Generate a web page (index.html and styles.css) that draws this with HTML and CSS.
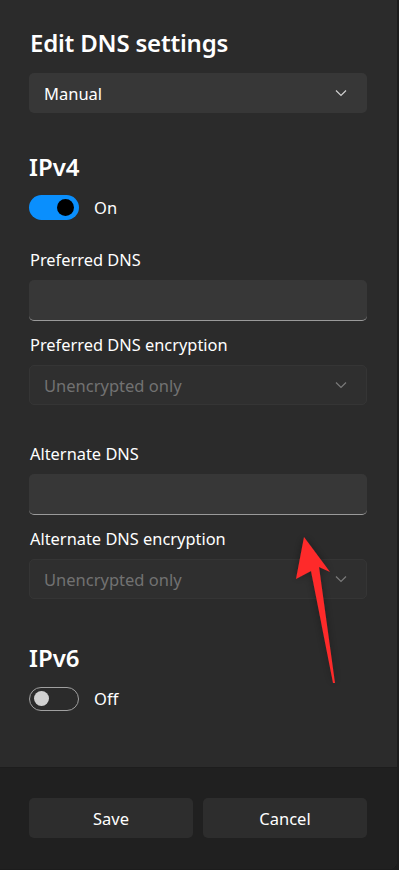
FILE: index.html
```html
<!DOCTYPE html>
<html lang="en">
<head>
<meta charset="utf-8">
<title>Edit DNS settings</title>
<link rel="stylesheet" href="styles.css">
</head>
<body>
<div class="dialog">
  <div class="content">
    <h1 class="title">Edit DNS settings</h1>
    <div class="select">
      <span>Manual</span>
      <svg class="chev" viewBox="0 0 12 8" width="12" height="8"><path d="M1 1.5 L6 6.5 L11 1.5" fill="none" stroke="currentColor" stroke-width="1.2"/></svg>
    </div>

    <h2 class="section">IPv4</h2>
    <div class="toggle-row">
      <span class="toggle on"><span class="knob"></span></span>
      <span class="toggle-label">On</span>
    </div>

    <div class="field first">
      <label class="label">Preferred DNS</label>
      <div class="input"></div>
    </div>
    <div class="field">
      <label class="label">Preferred DNS encryption</label>
      <div class="select disabled">
        <span>Unencrypted only</span>
        <svg class="chev" viewBox="0 0 12 8" width="12" height="8"><path d="M1 1.5 L6 6.5 L11 1.5" fill="none" stroke="currentColor" stroke-width="1.2"/></svg>
      </div>
    </div>

    <div class="field gap-top">
      <label class="label">Alternate DNS</label>
      <div class="input"></div>
    </div>
    <div class="field">
      <label class="label">Alternate DNS encryption</label>
      <div class="select disabled">
        <span>Unencrypted only</span>
        <svg class="chev" viewBox="0 0 12 8" width="12" height="8"><path d="M1 1.5 L6 6.5 L11 1.5" fill="none" stroke="currentColor" stroke-width="1.2"/></svg>
      </div>
    </div>

    <h2 class="section v6">IPv6</h2>
    <div class="toggle-row">
      <span class="toggle off"><span class="knob"></span></span>
      <span class="toggle-label">Off</span>
    </div>
  </div>
  <div class="footer">
    <button class="btn">Save</button>
    <button class="btn">Cancel</button>
  </div>

  <svg class="arrow" width="60" height="160" viewBox="0 0 60 160">
    <defs>
      <filter id="sh" x="-50%" y="-50%" width="200%" height="200%">
        <feGaussianBlur in="SourceAlpha" stdDeviation="4"/>
        <feComponentTransfer><feFuncA type="linear" slope="0.35"/></feComponentTransfer>
        <feMerge><feMergeNode/><feMergeNode in="SourceGraphic"/></feMerge>
      </filter>
    </defs>
    <polygon filter="url(#sh)" fill="#fe2b2b" points="23,8 49,43 38,38 54,154 52,154 30,42 15,50"/>
  </svg>
</div>
</body>
</html>
```
FILE: styles.css
```css
* { box-sizing: border-box; }
html, body { margin: 0; padding: 0; }
body {
  background: #1c1c1c;
  width: 399px;
  height: 870px;
  overflow: hidden;
  font-family: "Noto Sans", "Open Sans", sans-serif;
  color: #ffffff;
}
.dialog {
  position: relative;
  width: 397px;
  height: 869px;
  background: #2b2b2b;
  border-bottom-right-radius: 8px;
  overflow: hidden;
  display: flex;
  flex-direction: column;
}
.content {
  flex: 1;
  padding: 26px 30px 0 29px;
  display: flex;
  flex-direction: column;
}
.title {
  margin: 0 0 13px 1px;
  font-size: 24px;
  font-weight: 600;
  line-height: 34px;
  letter-spacing: -0.2px;
}
.select {
  height: 40px;
  background: #373737;
  border-radius: 5px;
  display: flex;
  align-items: center;
  justify-content: space-between;
  padding: 0 20px 0 15px;
  font-size: 16.5px;
  color: #ffffff;
  flex-shrink: 0;
}
.select .chev { color: #d0d0d0; }
.select.disabled {
  background: #2f2f2f;
  border: 1px solid #353535;
  color: #727272;
  padding-left: 14px;
  padding-right: 19px;
}
.select.disabled .chev { color: #7a7a7a; }
.section {
  margin: 38px 0 0 0;
  font-size: 24px;
  font-weight: 600;
  line-height: 32px;
}
.section.v6 { margin-top: 43px; }
.toggle-row {
  display: flex;
  align-items: center;
  margin-top: 12px;
  height: 25px;
}
.toggle {
  width: 50px;
  height: 25px;
  border-radius: 13px;
  display: flex;
  align-items: center;
  flex-shrink: 0;
}
.toggle.on {
  background: #0a8ffd;
  justify-content: flex-end;
  padding-right: 5px;
}
.toggle.on .knob {
  width: 17px;
  height: 17px;
  border-radius: 50%;
  background: #000000;
}
.toggle.off {
  height: 24px;
  border: 1.5px solid #a0a0a0;
  padding-left: 4px;
}
.toggle.off .knob {
  width: 15px;
  height: 15px;
  border-radius: 50%;
  background: #d0d0d0;
}
.toggle-label {
  margin-left: 15px;
  font-size: 16.5px;
}
.field {
  display: flex;
  flex-direction: column;
}
.label {
  font-size: 16.4px;
  line-height: 22px;
  margin: 13px 0 9px 1px;
  color: #ffffff;
}
.field.first .label { margin-top: 29px; }
.field.gap-top .label { margin-top: 38px; }
.input {
  height: 41px;
  background: #373737;
  border-radius: 5px;
  border-bottom: 1.5px solid #9a9a9a;
  flex-shrink: 0;
}
.footer {
  height: 102px;
  flex-shrink: 0;
  background: #202020;
  border-top: 1px solid #1d1d1d;
  display: flex;
  gap: 10px;
  padding: 30px 30px 0 29px;
}
.btn {
  flex: 1;
  height: 40px;
  background: #2d2d2d;
  border: none;
  border-radius: 5px;
  color: #ffffff;
  font-family: "Noto Sans", "Open Sans", sans-serif;
  font-size: 16.5px;
  padding: 0;
}
.arrow {
  position: absolute;
  left: 281px;
  top: 529px;
}
```
